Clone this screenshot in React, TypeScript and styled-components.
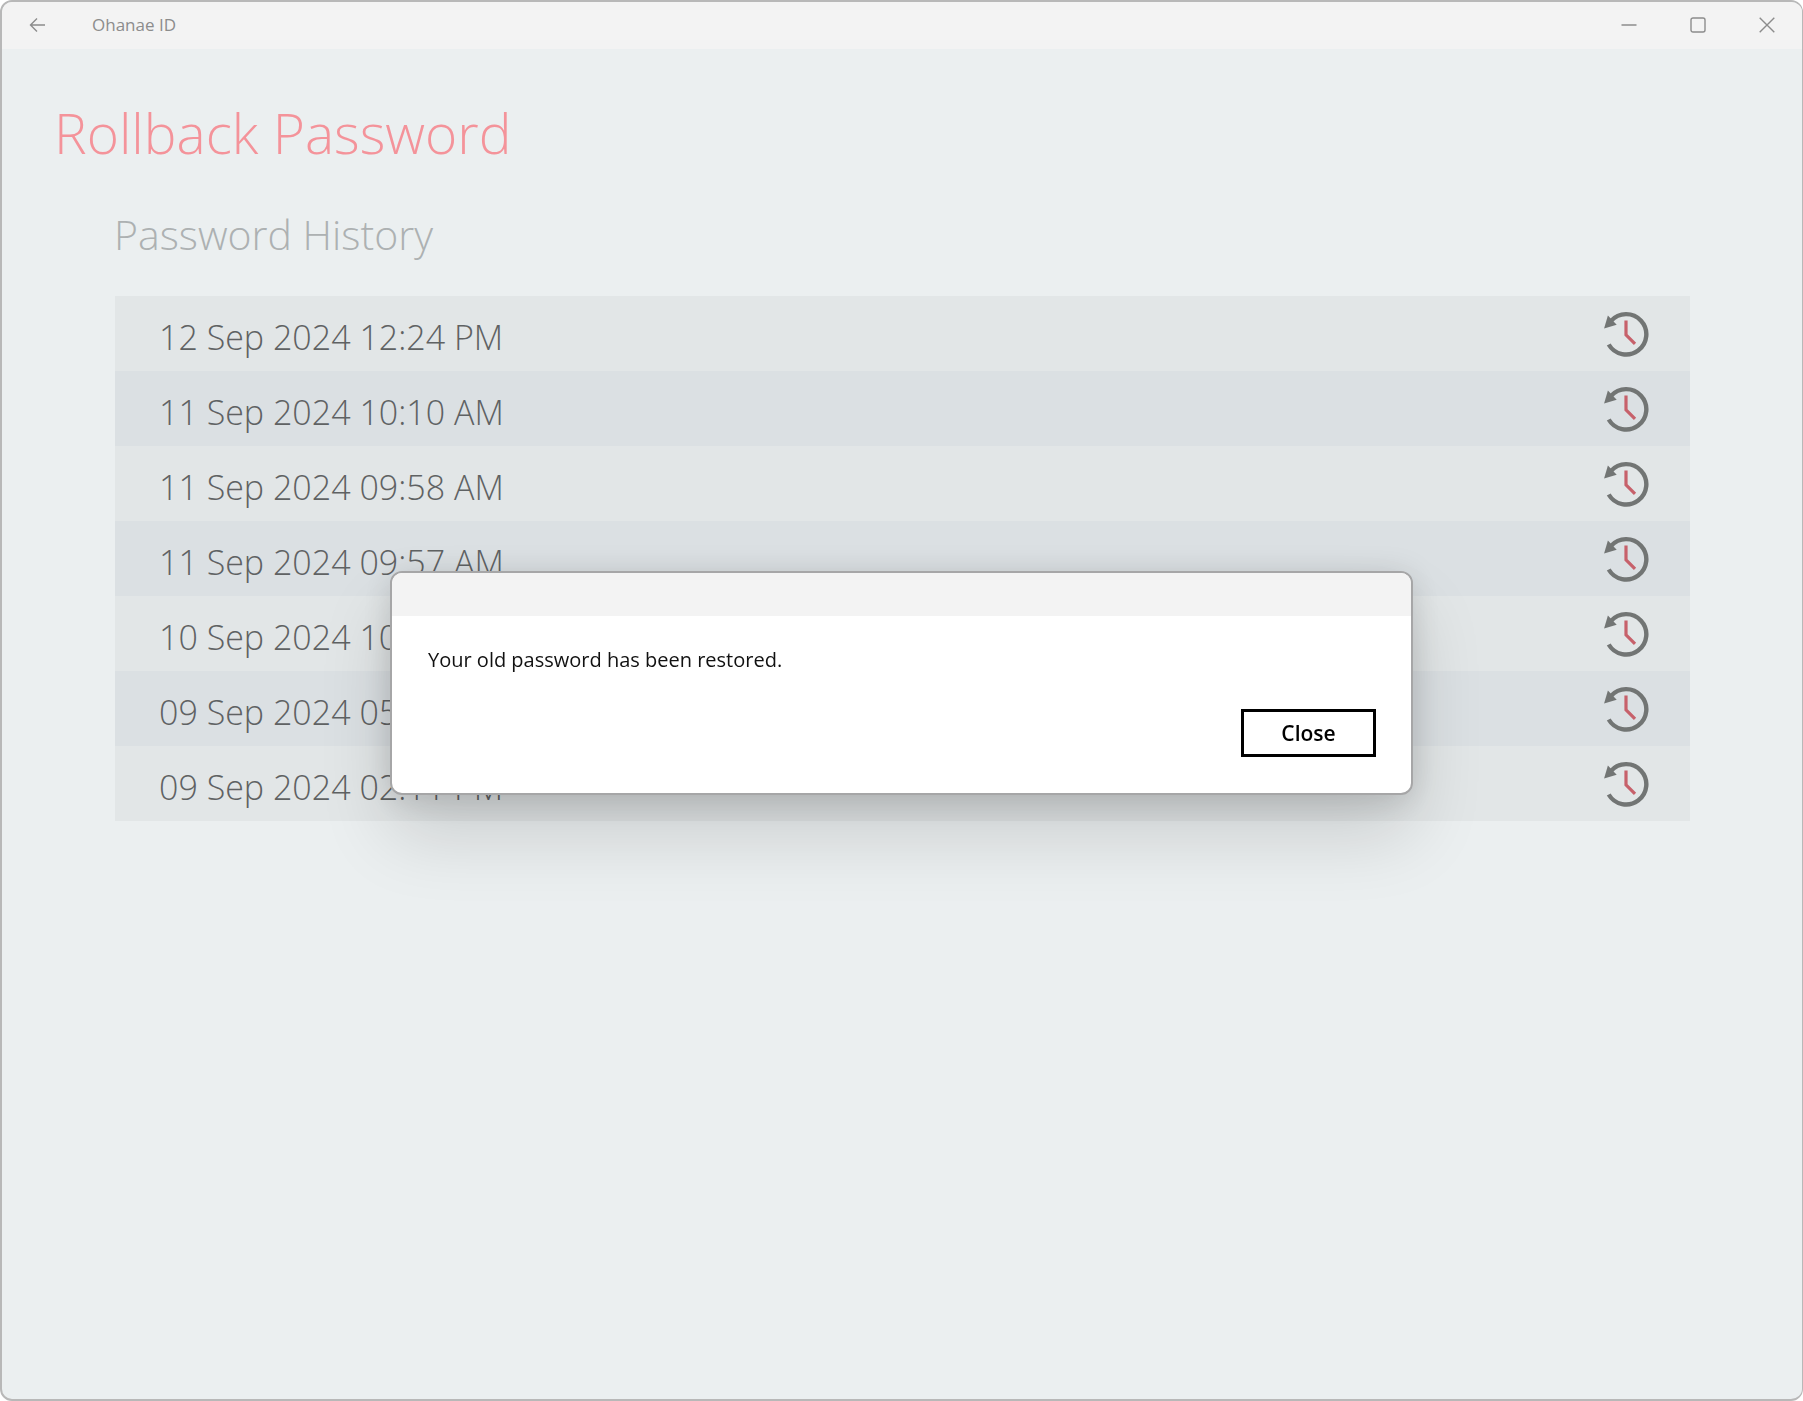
import React from "react";
import styled, { createGlobalStyle } from "styled-components";

const GlobalStyle = createGlobalStyle`
  *, *::before, *::after { box-sizing: border-box; }
  body {
    margin: 0;
    background: #ffffff;
    font-family: "Open Sans", "Noto Sans", sans-serif;
  }
  h1, h2, p, ul { margin: 0; padding: 0; }
  button { font-family: inherit; cursor: pointer; }
`;

const AppWindow = styled.div`
  min-height: 100vh;
  display: flex;
  flex-direction: column;
  border: 2px solid #b8b8b8;
  border-right-width: 1px;
  border-radius: 12px;
  background: #ebeff0;
  overflow: hidden;
`;

const TitleBar = styled.header`
  height: 47px;
  display: flex;
  align-items: flex-start;
  padding: 0 1px;
  background: #f3f3f3;
  color: #8c8c8c;
`;

const BarButton = styled.button`
  width: 69px;
  height: 45px;
  display: grid;
  place-items: center;
  padding: 0;
  border: 0;
  background: transparent;
  color: inherit;
`;

const AppName = styled.span`
  flex: 1;
  padding-left: 20px;
  font-size: 17px;
  line-height: 46px;
`;

const Content = styled.main`
  display: flex;
  flex-direction: column;
  padding: 44px 112px 48px 113px;
`;

const PageTitle = styled.h1`
  margin-left: -61px;
  font-size: 55px;
  line-height: 80px;
  font-weight: 300;
  color: #f4939a;
`;

const SectionTitle = styled.h2`
  margin-top: 31px;
  margin-left: -1px;
  font-size: 41px;
  line-height: 60px;
  font-weight: 300;
  color: #adb1b2;
`;

const HistoryList = styled.ul`
  margin-top: 32px;
  list-style: none;
`;

const HistoryRow = styled.li`
  height: 75px;
  display: flex;
  align-items: center;
  justify-content: space-between;
  padding: 0 40px 0 44px;
  background: #e2e6e7;
  &:nth-child(even) { background: #dbe0e3; }
`;

const Stamp = styled.span`
  padding-top: 7px;
  font-size: 34px;
  line-height: 52px;
  font-weight: 300;
  color: #5f6263;
`;

const RestoreButton = styled.button`
  width: 48px;
  height: 48px;
  padding: 0;
  border: 0;
  background: transparent;
  svg { display: block; }
`;

const Overlay = styled.div`
  position: fixed;
  inset: 0;
  display: flex;
  align-items: center;
  justify-content: center;
  padding: 0 24px 36px;
`;

const Dialog = styled.section`
  width: 1023px;
  max-width: 100%;
  border: 2px solid #a6a6a7;
  border-radius: 12px;
  background: #ffffff;
  overflow: hidden;
  box-shadow: 0 40px 72px rgba(0, 0, 0, 0.14), 0 4px 32px rgba(0, 0, 0, 0.14);
`;

const DialogBar = styled.div`
  height: 43px;
  background: #f3f3f3;
`;

const DialogBody = styled.div`
  display: flex;
  flex-direction: column;
  gap: 33px;
  padding: 28px 35px 36px 36px;
`;

const Message = styled.p`
  font-size: 20px;
  line-height: 32px;
  color: #111111;
`;

const CloseButton = styled.button`
  align-self: flex-end;
  width: 135px;
  height: 48px;
  padding: 0;
  border: 3px solid #000000;
  background: #ffffff;
  font-size: 21px;
  line-height: 32px;
  font-weight: 600;
  color: #000000;
`;

const BackIcon = () => (
  <svg width="17" height="16" viewBox="0 0 17 16" fill="none" stroke="currentColor" strokeWidth="1.4" aria-hidden="true">
    <path d="M16 8H1.5M8 1.5 1.5 8 8 14.5" />
  </svg>
);

const MinimizeIcon = () => (
  <svg width="16" height="16" viewBox="0 0 16 16" stroke="currentColor" strokeWidth="1.4" aria-hidden="true">
    <path d="M.5 8h15" />
  </svg>
);

const MaximizeIcon = () => (
  <svg width="16" height="16" viewBox="0 0 16 16" fill="none" stroke="currentColor" strokeWidth="1.4" aria-hidden="true">
    <rect x="1" y="1" width="14" height="14" rx="2" />
  </svg>
);

const CloseIcon = () => (
  <svg width="16" height="16" viewBox="0 0 16 16" stroke="currentColor" strokeWidth="1.4" aria-hidden="true">
    <path d="M.7.7l14.6 14.6M15.3.7.7 15.3" />
  </svg>
);

const RestoreIcon = () => (
  <svg width="48" height="48" viewBox="0 0 48 48" fill="none" aria-hidden="true">
    <path d="M6.7 34.5A20.2 20.2 0 1 0 9 10.9" stroke="#727574" strokeWidth="4.4" />
    <path d="M5.9 5.6 14.7 14.8 2.1 18.4Z" fill="#727574" />
    <path d="M24 10.4v14.5l9 9" stroke="#c7616b" strokeWidth="3.2" />
  </svg>
);

const history = [
  "12 Sep 2024 12:24 PM",
  "11 Sep 2024 10:10 AM",
  "11 Sep 2024 09:58 AM",
  "11 Sep 2024 09:57 AM",
  "10 Sep 2024 10:11 AM",
  "09 Sep 2024 05:11 PM",
  "09 Sep 2024 02:11 PM",
];

export default function App() {
  return (
    <>
      <GlobalStyle />
      <AppWindow>
        <TitleBar>
          <BarButton aria-label="Back"><BackIcon /></BarButton>
          <AppName>Ohanae ID</AppName>
          <BarButton aria-label="Minimize"><MinimizeIcon /></BarButton>
          <BarButton aria-label="Maximize"><MaximizeIcon /></BarButton>
          <BarButton aria-label="Close window"><CloseIcon /></BarButton>
        </TitleBar>
        <Content>
          <PageTitle>Rollback Password</PageTitle>
          <SectionTitle>Password History</SectionTitle>
          <HistoryList>
            {history.map((stamp) => (
              <HistoryRow key={stamp}>
                <Stamp>{stamp}</Stamp>
                <RestoreButton aria-label={`Restore password from ${stamp}`}>
                  <RestoreIcon />
                </RestoreButton>
              </HistoryRow>
            ))}
          </HistoryList>
        </Content>
      </AppWindow>
      <Overlay>
        <Dialog role="dialog" aria-modal="true" aria-describedby="dialog-message">
          <DialogBar />
          <DialogBody>
            <Message id="dialog-message">Your old password has been restored.</Message>
            <CloseButton>Close</CloseButton>
          </DialogBody>
        </Dialog>
      </Overlay>
    </>
  );
}
